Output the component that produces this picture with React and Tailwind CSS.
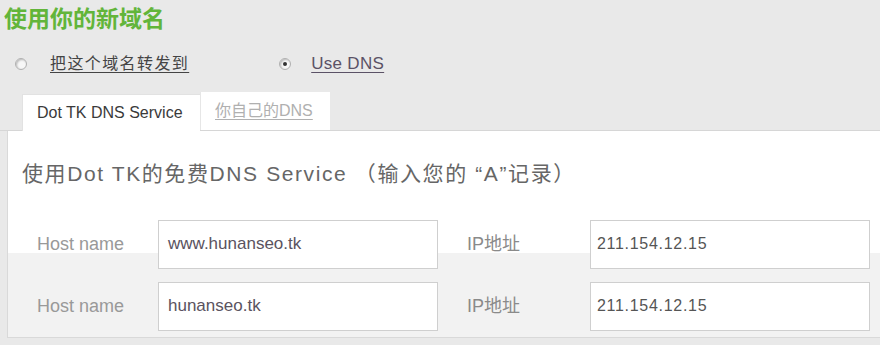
import React from "react";

function Radio({ checked }) {
  return (
    <span className="relative inline-block w-[12px] h-[12px] rounded-full border border-[#b0b0b0] bg-[#f7f7f7] shadow-[inset_1px_1px_2px_rgba(0,0,0,0.25)] shrink-0">
      {checked && (
        <span className="absolute left-[3px] top-[3px] w-[4px] h-[4px] rounded-full bg-[#333]" />
      )}
    </span>
  );
}

function Row({ label, host, ip }) {
  return (
    <div className="flex items-center h-[62px] pl-[29px]">
      <div className="w-[121px] text-[18px] text-[#999]">{label}</div>
      <div className="w-[280px] h-[49px] border border-[#cfcfcf] bg-white flex items-center pl-[9px] text-[17px] text-[#5a5360]">
        {host}
      </div>
      <div className="w-[152px] pl-[29px] text-[18px] text-[#8a8a8a]">IP地址</div>
      <div className="w-[280px] h-[49px] border border-[#cfcfcf] bg-white flex items-center pl-[6px] text-[16px] tracking-[0.7px] text-[#555]">
        {ip}
      </div>
    </div>
  );
}

export default function App() {
  return (
    <div className="w-[880px] h-[345px] overflow-hidden bg-[#e9e9e9] font-['Liberation_Sans','Noto_Sans_CJK_SC',sans-serif]">
      <h1 className="pl-[4px] pt-[6px] text-[23px] leading-[26px] font-bold text-[#62b53a]">
        使用你的新域名
      </h1>

      <div className="flex items-center h-[30px] mt-[17px] pl-[15px]">
        <Radio />
        <span className="ml-[23px] text-[16px] tracking-[1.4px] text-[#444] underline underline-offset-[3px]">
          把这个域名转发到
        </span>
        <span className="ml-[90px] flex items-center">
          <Radio checked />
        </span>
        <span className="ml-[20px] text-[17px] tracking-[0.3px] text-[#5b5266] underline underline-offset-[3px]">
          Use DNS
        </span>
      </div>

      <div className="flex items-end h-[38px] mt-[14px] pl-[22px] border-b border-[#d6d6d6]">
        <div className="h-[37px] w-[178px] mb-[-1px] bg-white border-l border-t border-[#e2e2e2] flex items-center pl-[14px] text-[16px] text-[#3a3a3a]">
          Dot TK DNS Service
        </div>
        <div className="h-[38px] w-[130px] bg-white border-l border-[#e6e6e6] flex items-center pl-[14px] text-[16px] text-[#b0b0b0] underline underline-offset-[3px]">
          你自己的DNS
        </div>
      </div>

      <div className="ml-[7px] bg-white border-l border-b border-[#d9d9d9]">
        <div className="pt-[29px] pl-[14px] text-[21px] leading-[28px] tracking-[1.6px] text-[#666]">
          使用Dot TK的免费DNS Service （输入您的 “A”记录）
        </div>
        <div className="mt-[25px] bg-[linear-gradient(to_bottom,#ffffff_40px,#f2f2f2_40px)]">
          <Row label="Host name" host="www.hunanseo.tk" ip="211.154.12.15" />
          <Row label="Host name" host="hunanseo.tk" ip="211.154.12.15" />
        </div>
      </div>
    </div>
  );
}
